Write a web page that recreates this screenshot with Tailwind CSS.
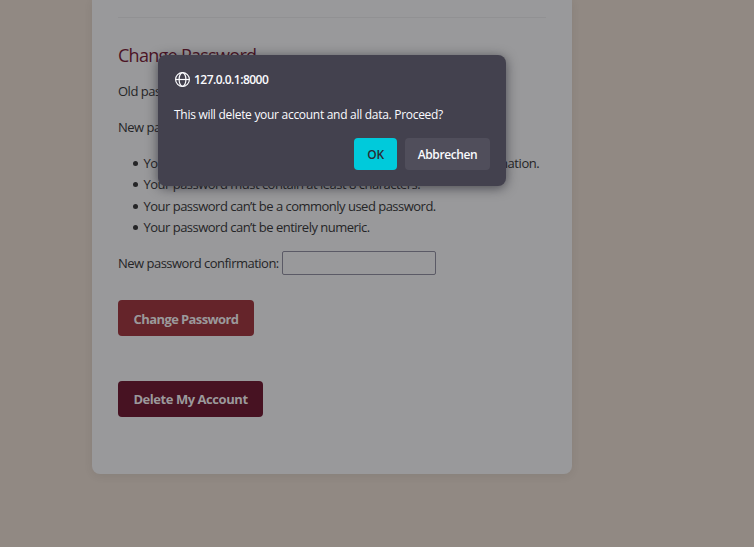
<!DOCTYPE html>
<html lang="en">
<head>
<meta charset="utf-8">
<title>Account settings</title>
<script src="https://cdn.jsdelivr.net/npm/@tailwindcss/browser@4"></script>
</head>
<body class="h-[547px] overflow-hidden bg-[#918983] font-['Open_Sans','Noto_Sans',sans-serif] text-[13px] text-[#252527]">
<main class="ml-[92px] h-[474px] w-[480px] rounded-b-[8px] bg-[#99999b] px-[26px] pt-[17px] whitespace-nowrap shadow-[0_2px_10px_rgba(0,0,0,0.07)]">
  <hr class="border-t border-[#919193]">
  <h2 class="mt-[23px] h-[28px] text-[18px] leading-[28px] tracking-[-0.72px] text-[#4c1426]">Change Password</h2>
  <p class="mt-[12px] h-[21px] leading-[21px] tracking-[-0.5px]">Old password:</p>
  <p class="mt-[15px] h-[21px] leading-[21px] tracking-[-0.5px]">New password:</p>
  <ul class="mt-[15px] pl-[14.5px] leading-[21.3px] tracking-[-0.51px]">
    <li class="flex items-center gap-[6px] tracking-[-0.45px]"><span class="size-[5px] rounded-full bg-[#252527]"></span>Your password can't be too similar to your other personal information.</li>
    <li class="flex items-center gap-[6px]"><span class="size-[5px] rounded-full bg-[#252527]"></span>Your password must contain at least 8 characters.</li>
    <li class="flex items-center gap-[6px]"><span class="size-[5px] rounded-full bg-[#252527]"></span>Your password can’t be a commonly used password.</li>
    <li class="flex items-center gap-[6px]"><span class="size-[5px] rounded-full bg-[#252527]"></span>Your password can’t be entirely numeric.</li>
  </ul>
  <div class="mt-[12.8px] flex h-[25px] items-center">
    <label for="confirm" class="w-[164px] pt-px tracking-[-0.51px]">New password confirmation:</label>
    <input id="confirm" type="password" class="h-[24px] w-[154px] rounded-[2px] border border-[#5b5a66] bg-[#99999b]">
  </div>
  <button class="mt-[24px] block h-[36px] w-[136px] rounded-[4px] bg-[#65242a] pt-[3px] font-bold tracking-[-0.6px] text-[#9b999b]">Change Password</button>
  <button class="mt-[45px] block h-[36px] w-[145px] rounded-[4px] bg-[#471222] pt-px font-bold tracking-[-0.45px] text-[#9b999b]">Delete My Account</button>
</main>
<div role="dialog" class="absolute top-[55px] left-[158px] h-[131px] w-[348px] rounded-[8px] bg-[#43414e] px-[16px] pt-[16px] text-[12px] whitespace-nowrap text-[#fbfbfe] shadow-[0_2px_12px_rgba(20,20,30,0.6)]">
  <div class="flex h-[17px] items-center gap-[3px]">
    <svg class="size-[17px]" viewBox="0 0 17 17" fill="none" stroke="#fbfbfe" stroke-width="1.2"><circle cx="8.5" cy="8.5" r="6.9"/><ellipse cx="8.5" cy="8.5" rx="3.4" ry="6.9"/><path d="M1.6 8.5h13.8"/></svg>
    <span class="font-semibold tracking-[-0.54px]">127.0.0.1:8000</span>
  </div>
  <p class="mt-[18px] h-[17px] leading-[17px] tracking-[-0.29px]">This will delete your account and all data. Proceed?</p>
  <div class="mt-[15px] flex justify-end gap-[8px] font-semibold">
    <button class="h-[32px] w-[43px] rounded-[4px] bg-[#00cadb] pt-px tracking-[-0.2px] text-[#2b2a33]">OK</button>
    <button class="h-[32px] w-[85px] rounded-[4px] bg-[#504e5b] pt-px tracking-[-0.4px]">Abbrechen</button>
  </div>
</div>
</body>
</html>
